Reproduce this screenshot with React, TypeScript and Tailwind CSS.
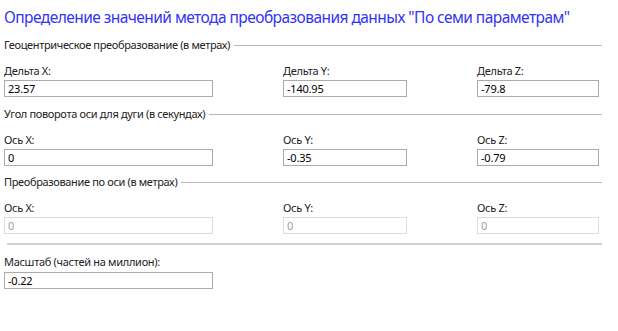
import React from 'react';

interface Field {
  label: string;
  value: string;
}

interface Section {
  title: string;
  fields: Field[];
  disabled?: boolean;
}

const sections: Section[] = [
  {
    title: 'Геоцентрическое преобразование (в метрах)',
    fields: [
      { label: 'Дельта X:', value: '23.57' },
      { label: 'Дельта Y:', value: '-140.95' },
      { label: 'Дельта Z:', value: '-79.8' },
    ],
  },
  {
    title: 'Угол поворота оси для дуги (в секундах)',
    fields: [
      { label: 'Ось X:', value: '0' },
      { label: 'Ось Y:', value: '-0.35' },
      { label: 'Ось Z:', value: '-0.79' },
    ],
  },
  {
    title: 'Преобразование по оси (в метрах)',
    fields: [
      { label: 'Ось X:', value: '0' },
      { label: 'Ось Y:', value: '0' },
      { label: 'Ось Z:', value: '0' },
    ],
    disabled: true,
  },
];

// input widths differ per column, as in the original form
const inputWidths = ['w-[209px]', 'w-[124px]', 'w-[122px]'];

const TextBox: React.FC<{ value: string; width: string; disabled?: boolean }> = ({ value, width, disabled }) => (
  <div
    className={`${width} h-[17px] border px-[3px] text-[11px] leading-[15px] tracking-[-0.2px] ${
      disabled ? 'border-[#dcdcdc] text-[#a0a0a0]' : 'border-[#ababab] text-black'
    }`}
  >
    {value}
  </div>
);

const App: React.FC = () => {
  return (
    <div className="w-[618px] h-[331px] bg-white pl-1 pt-[6px] font-['Noto_Sans',sans-serif] text-[#222]">
      <h1 className="text-[15.5px] leading-[22px] text-[#3333f5] tracking-[-0.55px] whitespace-nowrap">
        Определение значений метода преобразования данных "По семи параметрам"
      </h1>

      {sections.map((section, i) => (
        <div key={i}>
          <div className={`flex items-center gap-[4px] pr-4 ${i === 2 ? 'mt-[8px]' : 'mt-[9px]'}`}>
            <span className="text-[11px] leading-[16px] tracking-[-0.35px] whitespace-nowrap">{section.title}</span>
            <div className="flex-1 h-px bg-[#b9b9b9] mt-[1px]" />
          </div>
          <div className="grid grid-cols-[279px_194px_1fr] mt-[10px]">
            {section.fields.map((f, j) => (
              <div key={j}>
                <div className="text-[11px] leading-[16px] tracking-[-0.3px] mb-[1px]">{f.label}</div>
                <TextBox value={f.value} width={inputWidths[j]} disabled={section.disabled} />
              </div>
            ))}
          </div>
        </div>
      ))}

      <div className="mt-[9px] ml-[3px] mr-[16px] h-[2px] bg-[#d2d2d2]" />

      <div className="mt-[9px] text-[11px] leading-[16px] tracking-[-0.3px] mb-[2px]">Масштаб (частей на миллион):</div>
      <TextBox value="-0.22" width="w-[209px]" />
    </div>
  );
};

export default App;
